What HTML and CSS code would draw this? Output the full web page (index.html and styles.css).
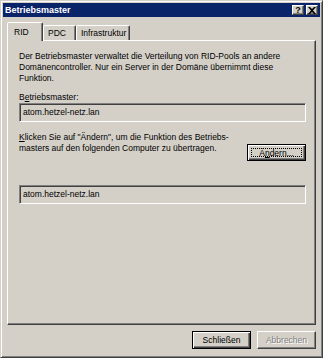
FILE: index.html
```html
<!DOCTYPE html>
<html lang="de">
<head>
  <meta charset="UTF-8" />
  <title>Betriebsmaster</title>
  <link rel="stylesheet" href="styles.css">
</head>
<body>

  <div class="window">
    <!-- Title bar -->
    <div class="titlebar">
      <span class="title">Betriebsmaster</span>
      <div class="title-buttons">
        <span class="tbtn help">?</span>
        <span class="tbtn close">
          <svg width="8" height="7" viewBox="0 0 8 7">
            <path d="M0 0h2l2 2 2-2h2L5 3.5 8 7H6L4 5 2 7H0l3-3.5z" fill="#000"/>
          </svg>
        </span>
      </div>
    </div>

    <div class="content">
      <!-- Tabs -->
      <div class="tabs">
        <div class="tab active">RID</div>
        <div class="tab">PDC</div>
        <div class="tab">Infrastruktur</div>
      </div>

      <!-- Tab panel -->
      <div class="panel">
        <p class="intro">Der Betriebsmaster verwaltet die Verteilung von RID-Pools an andere Domänencontroller. Nur ein Server in der Domäne übernimmt diese Funktion.</p>

        <label class="field-label">B<u>e</u>triebsmaster:</label>
        <div class="textbox">atom.hetzel-netz.lan</div>

        <div class="change-row">
          <p class="hint"><u>K</u>licken Sie auf "Ändern", um die Funktion des Betriebs-<br>masters auf den folgenden Computer zu übertragen.</p>
          <button class="btn focused"><span class="focus-rect">Ä<u>n</u>dern...</span></button>
        </div>

        <div class="textbox">atom.hetzel-netz.lan</div>
      </div>

      <!-- Dialog buttons -->
      <div class="buttons">
        <button class="btn default">Schließen</button>
        <button class="btn disabled">Abbrechen</button>
      </div>
    </div>
  </div>

</body>
</html>
```

FILE: styles.css
```css
* {
  box-sizing: border-box;
  margin: 0;
  padding: 0;
}

body {
  font-family: "Liberation Sans", Arial, sans-serif;
  font-size: 8.5px;
  background: #d4d0c8;
  color: #000;
}

u {
  text-decoration: underline;
  text-underline-offset: 1px;
}

/* Window frame */
.window {
  width: 323px;
  height: 358px;
  display: flex;
  flex-direction: column;
  background: #d4d0c8;
  border: 1px solid;
  border-color: #d4d0c8 #404040 #404040 #d4d0c8;
  box-shadow: inset 1px 1px #fff, inset -1px -1px #808080;
  padding: 2px;
}

.titlebar {
  height: 14px;
  background: #0a246a;
  display: flex;
  justify-content: space-between;
  align-items: center;
  padding: 0 2px 0 2px;
}

.title {
  color: #fff;
  font-weight: bold;
  font-size: 9px;
}

.title-buttons {
  display: flex;
  gap: 2px;
}

.tbtn {
  width: 12px;
  height: 10px;
  display: flex;
  align-items: center;
  justify-content: center;
  background: #d4d0c8;
  border: 1px solid;
  border-color: #fff #404040 #404040 #fff;
  box-shadow: inset -1px -1px #808080;
  font-weight: bold;
  font-size: 9px;
  line-height: 1;
}

/* Content */
.content {
  flex: 1;
  display: flex;
  flex-direction: column;
  padding: 5px 4px 6px 4px;
}

.tabs {
  display: flex;
  align-items: flex-end;
  height: 18px;
  position: relative;
  z-index: 1;
}

.tab {
  height: 15px;
  padding: 0 4px;
  display: flex;
  align-items: center;
  border: 1px solid;
  border-bottom: none;
  border-color: #fff #404040 transparent #fff;
  box-shadow: inset -1px 0 #808080;
  border-radius: 2px 2px 0 0;
  background: #d4d0c8;
}

.tab.active {
  height: 19px;
  margin-bottom: -1px;
  padding: 0 8px 0 6px;
  width: 36px;
}

.tab:nth-child(2) {
  width: 33px;
}

.tab:nth-child(3) {
  width: 54px;
}

.panel {
  flex: 1;
  border: 1px solid;
  border-color: #fff #404040 #404040 #fff;
  box-shadow: inset -1px -1px #808080;
  padding: 10px 11px 0 11px;
}

.intro {
  line-height: 11px;
  margin-bottom: 8px;
}

.field-label {
  display: block;
  line-height: 11px;
}

.textbox {
  height: 19px;
  width: 287px;
  border: 1px solid;
  border-color: #808080 #fff #fff #808080;
  box-shadow: inset 1px 1px #404040, inset -1px -1px #d4d0c8;
  padding: 0 3px;
  line-height: 17px;
  white-space: nowrap;
}

.change-row {
  display: flex;
  justify-content: space-between;
  align-items: flex-start;
  margin: 10px 0 24px 0;
  width: 287px;
}

.hint {
  line-height: 11px;
}

/* Push buttons */
.btn {
  font-family: inherit;
  font-size: 8.5px;
  width: 59px;
  height: 18px;
  background: #d4d0c8;
  color: #000;
  border: 1px solid;
  border-color: #fff #404040 #404040 #fff;
  box-shadow: inset -1px -1px #808080;
  display: flex;
  align-items: center;
  justify-content: center;
}

.btn.focused {
  height: 17px;
  margin-top: 12px;
  border: 1px solid #000;
  box-shadow: inset 1px 1px #fff, inset -1px -1px #404040, inset -2px -2px #808080;
  padding: 3px;
}

.focus-rect {
  flex: 1;
  align-self: stretch;
  display: flex;
  align-items: center;
  justify-content: center;
  border: 1px dotted #000;
}

.btn.default {
  border: 1px solid #000;
  box-shadow: inset 1px 1px #fff, inset -1px -1px #404040, inset -2px -2px #808080;
}

.btn.disabled {
  color: #808080;
  text-shadow: 1px 1px #fff;
}

.buttons {
  display: flex;
  justify-content: flex-end;
  gap: 6px;
  margin-top: 6px;
}
```
